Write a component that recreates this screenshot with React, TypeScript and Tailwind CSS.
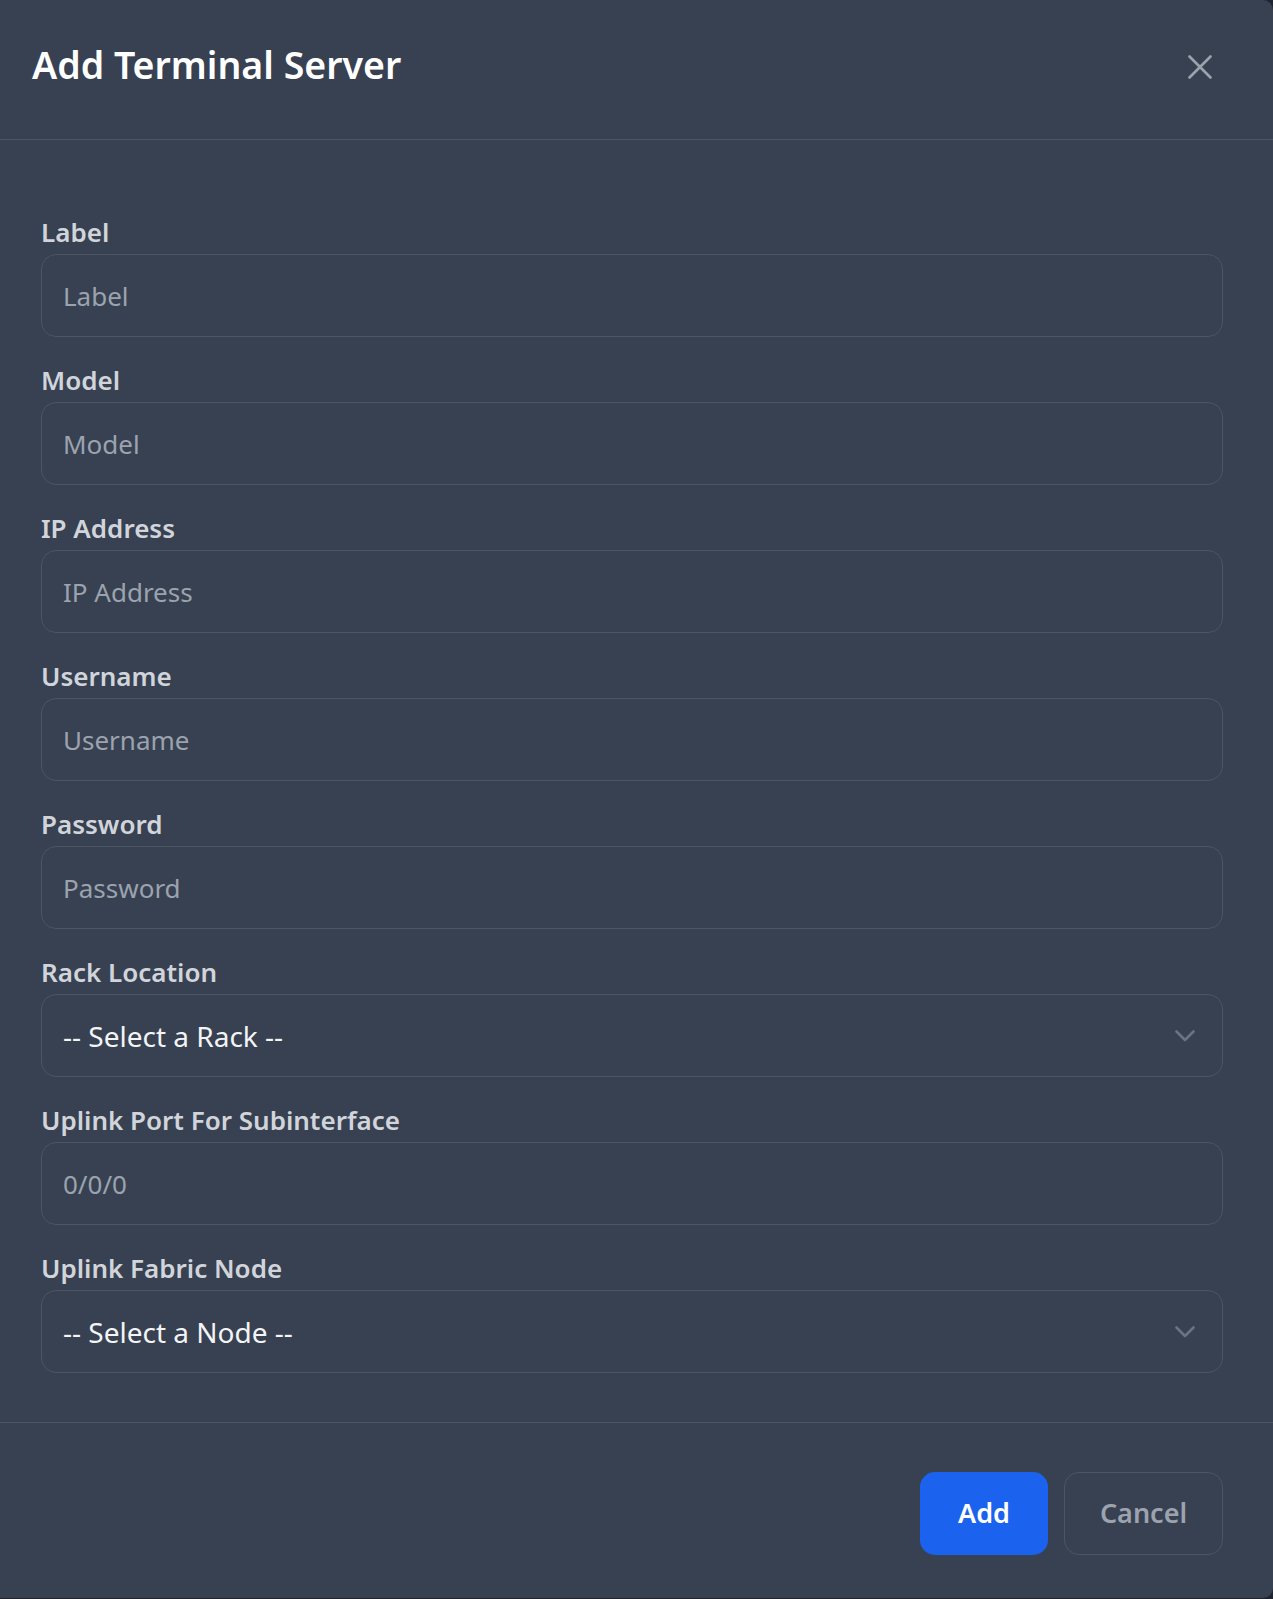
import React from "react";

const fields = [
  { label: "Label", placeholder: "Label" },
  { label: "Model", placeholder: "Model" },
  { label: "IP Address", placeholder: "IP Address" },
  { label: "Username", placeholder: "Username" },
  { label: "Password", placeholder: "Password", type: "password" },
];

function Chevron() {
  return (
    <svg width="20" height="12" viewBox="0 0 20 12" fill="none" className="pointer-events-none absolute right-[28px] top-1/2 -translate-y-1/2">
      <path d="M1.5 1.5 L10 10 L18.5 1.5" stroke="#6b7280" strokeWidth="2.6" strokeLinecap="round" strokeLinejoin="round" />
    </svg>
  );
}

function Field({ label, children }: { label: string; children: React.ReactNode }) {
  return (
    <div className="flex flex-col">
      <label className="text-[26px] leading-[30px] font-semibold text-[#d1d5db] mb-[7px]">{label}</label>
      {children}
    </div>
  );
}

const inputCls =
  "w-full h-[83px] rounded-[15px] border border-[#4b5563] bg-[#374151] px-[21px] text-[26px] text-[#f3f4f6] placeholder:text-[#9ca3af] outline-none";

function SelectBox({ text }: { text: string }) {
  return (
    <div className="relative">
      <select className={inputCls + " appearance-none !text-[28px]"} defaultValue="">
        <option value="">{text}</option>
      </select>
      <Chevron />
    </div>
  );
}

export default function App() {
  return (
    <div className="min-h-screen bg-[#1f2430]" style={{ fontFamily: '"Noto Sans", "Open Sans", sans-serif' }}>
      <div className="w-[1273px] bg-[#374151] rounded-r-[10px] flex flex-col">
        {/* Header */}
        <div className="h-[140px] border-b border-[#4b5563] flex items-start justify-between pl-[32px] pr-[61px] pt-[42px]">
          <h2 className="text-[37.5px] leading-[46px] font-semibold text-white">Add Terminal Server</h2>
          <button className="mt-[13px] text-[#9ca3af]">
            <svg width="24" height="24" viewBox="0 0 24 24" fill="none">
              <path d="M1.5 1.5 L22.5 22.5 M22.5 1.5 L1.5 22.5" stroke="currentColor" strokeWidth="2.6" strokeLinecap="round" />
            </svg>
          </button>
        </div>

        {/* Body */}
        <div className="pl-[41px] pr-[50px] pt-[77px] pb-[49px] flex flex-col gap-[28px]">
          {fields.map((f) => (
            <Field key={f.label} label={f.label}>
              <input type={f.type ?? "text"} placeholder={f.placeholder} className={inputCls} />
            </Field>
          ))}
          <Field label="Rack Location">
            <SelectBox text="-- Select a Rack --" />
          </Field>
          <Field label="Uplink Port For Subinterface">
            <input type="text" placeholder="0/0/0" className={inputCls} />
          </Field>
          <Field label="Uplink Fabric Node">
            <SelectBox text="-- Select a Node --" />
          </Field>
        </div>

        {/* Footer */}
        <div className="border-t border-[#4b5563] flex justify-end gap-[16px] pr-[50px] pt-[49px] pb-[43px]">
          <button className="w-[128px] h-[83px] rounded-[15px] bg-[#1b63ee] text-white text-[27px] font-semibold">Add</button>
          <button className="w-[159px] h-[83px] rounded-[15px] border border-[#4b5563] text-[#9ca3af] text-[27px] font-semibold">
            Cancel
          </button>
        </div>
      </div>
    </div>
  );
}
